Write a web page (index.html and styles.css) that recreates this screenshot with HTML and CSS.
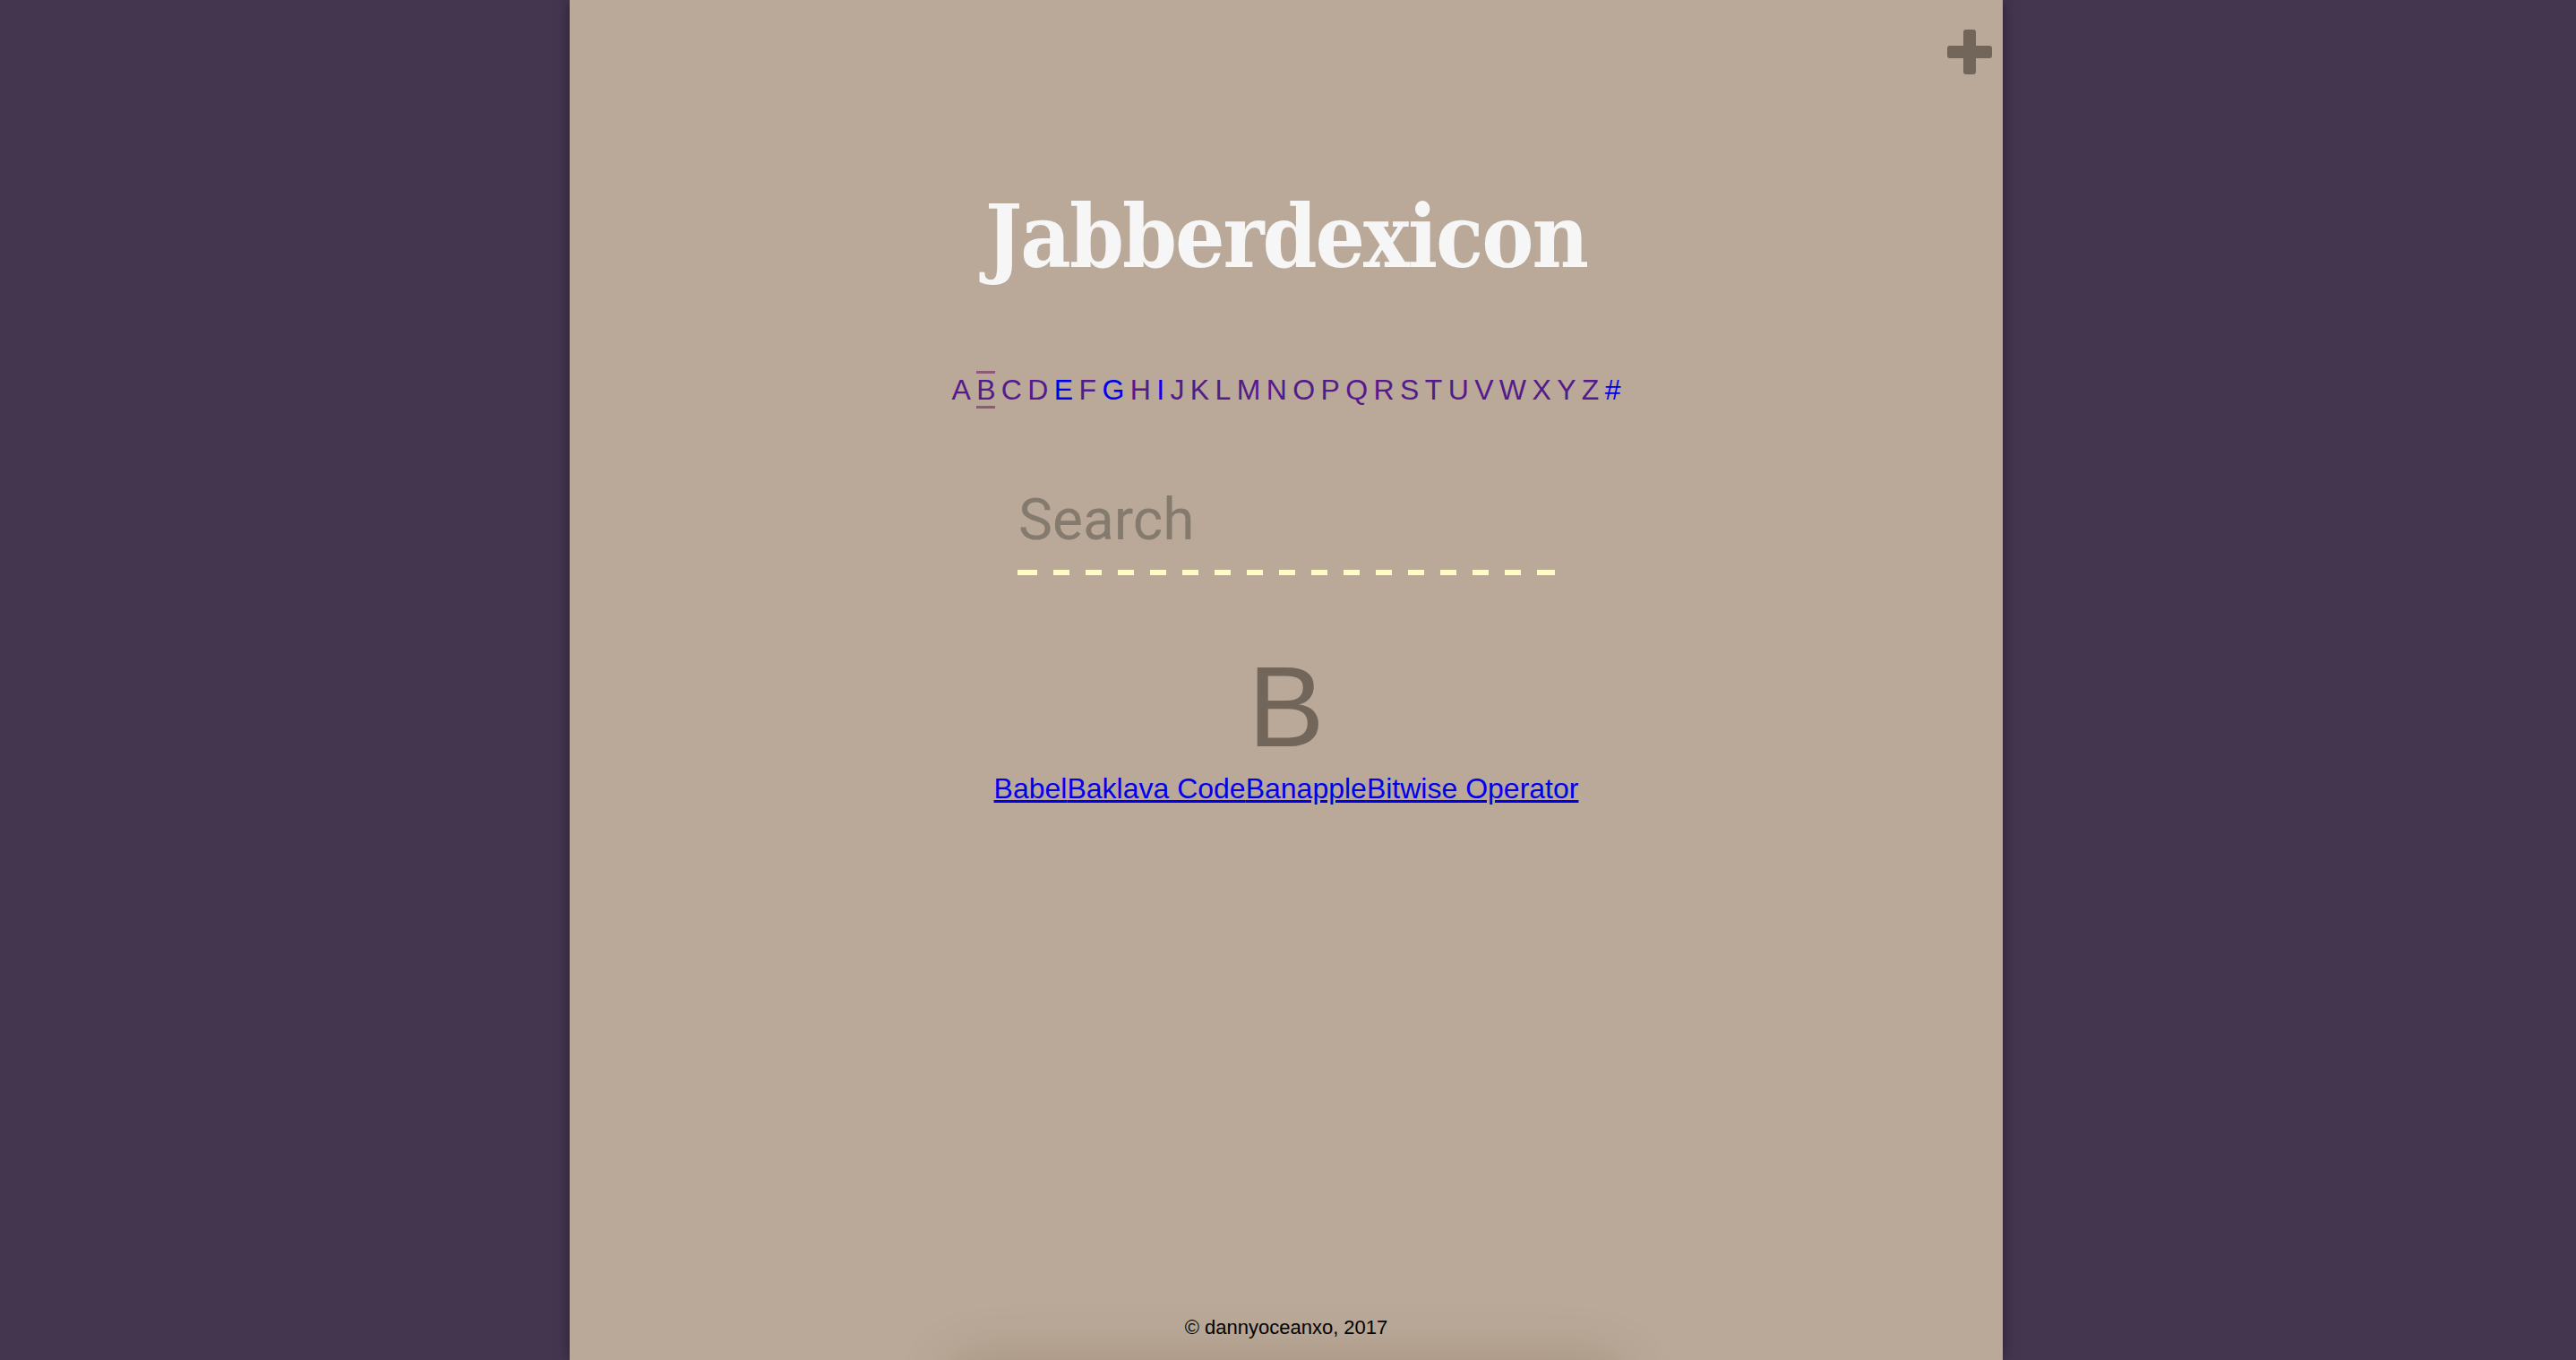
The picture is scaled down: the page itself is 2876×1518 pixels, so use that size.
FILE: index.html
```html
<!DOCTYPE html>
<html lang="en">
<head>
<meta charset="utf-8">
<title>Jabberdexicon</title>
<link rel="stylesheet" href="styles.css">
</head>
<body>
<div class="page">
  <a class="add-btn" href="#" aria-label="Add a term">
    <svg width="50" height="50" viewBox="0 0 50 50"><rect x="18" y="0" width="14" height="50" rx="3"/><rect x="0" y="18" width="50" height="14" rx="3"/></svg>
  </a>
  <h1 class="title">Jabberdexicon</h1>
  <nav class="alpha"><a class="v">A</a><a class="v active">B</a><a class="v">C</a><a class="v">D</a><a class="u">E</a><a class="v">F</a><a class="u">G</a><a class="v">H</a><a class="u">I</a><a class="v">J</a><a class="v">K</a><a class="v">L</a><a class="v">M</a><a class="v">N</a><a class="v">O</a><a class="v">P</a><a class="v">Q</a><a class="v">R</a><a class="v">S</a><a class="v">T</a><a class="v">U</a><a class="v">V</a><a class="v">W</a><a class="v">X</a><a class="v">Y</a><a class="v">Z</a><a class="u">#</a></nav>
  <div class="search"><input class="search-input" type="text" placeholder="Search"></div>
  <div class="letter">B</div>
  <div class="terms"><a href="#">Babel</a><a href="#">Baklava Code</a><a href="#">Banapple</a><a href="#">Bitwise Operator</a></div>
  <footer class="footer">© dannyoceanxo, 2017</footer>
  <div class="footer-shade"></div>
</div>
</body>
</html>
```
FILE: styles.css
```css
html, body {
  margin: 0;
  padding: 0;
}
body {
  background: #45364f;
  font-family: "Liberation Sans", Arial, sans-serif;
  padding-right: 4px;
  overflow: hidden;
}
.page {
  position: relative;
  width: 1600px;
  min-height: 1518px;
  margin: 0 auto;
  background: #baa998;
  box-shadow: 0 0 14px rgba(20, 10, 30, 0.55);
  display: flex;
  flex-direction: column;
  align-items: center;
  overflow: hidden;
}
.add-btn {
  position: absolute;
  top: 33px;
  right: 12px;
  width: 50px;
  height: 50px;
  fill: #716659;
}
.add-btn svg { display: block; }
.title {
  margin: 205px 0 0;
  font-family: "DejaVu Serif", serif;
  font-weight: bold;
  font-stretch: condensed;
  font-size: 97px;
  line-height: 118px;
  color: #f6f6f6;
  letter-spacing: -2px;
}
.alpha {
  margin-top: 94px;
  font-size: 32px;
  line-height: 36px;
  height: 36px;
  white-space: nowrap;
}
.alpha a {
  margin: 0 3.2px;
  text-decoration: none;
}
.alpha .v { color: #551a8b; }
.alpha .u { color: #0000ee; }
.alpha .active {
  border-top: 3px solid #8d5a79;
  border-bottom: 3px solid #8d5a79;
}
.search {
  margin-top: 87px;
  width: 600px;
  padding-bottom: 22px;
  background:
    linear-gradient(#fffcc3, #fffcc3) left bottom / 4px 6px no-repeat,
    linear-gradient(#fffcc3, #fffcc3) right bottom / 4px 6px no-repeat,
    repeating-linear-gradient(90deg, #fffcc3 0 18px, transparent 18px 36px) 4px bottom / 592px 6px no-repeat;
}
.search-input {
  display: block;
  box-sizing: border-box;
  width: 600px;
  height: 80px;
  padding: 0 0 0 1px;
  border: none;
  outline: none;
  background: transparent;
  font-family: Roboto, "Liberation Sans", sans-serif;
  font-size: 64px;
  color: #72665a;
}
.search-input::placeholder {
  color: #857a6e;
  opacity: 1;
}
.letter {
  margin-top: 83px;
  font-size: 128px;
  line-height: 128px;
  color: #72665a;
}
.terms {
  margin-top: 9px;
  font-size: 32px;
  line-height: 36px;
  white-space: nowrap;
}
.terms a { color: #0000ee; }
.footer {
  margin-top: auto;
  padding-bottom: 23px;
  font-size: 22px;
  line-height: 26px;
  color: #000;
}
.footer-shade {
  position: absolute;
  left: 420px;
  bottom: -80px;
  width: 760px;
  height: 80px;
  border-radius: 40px;
  box-shadow: 0 0 60px rgba(90, 60, 40, 0.22);
}
```
